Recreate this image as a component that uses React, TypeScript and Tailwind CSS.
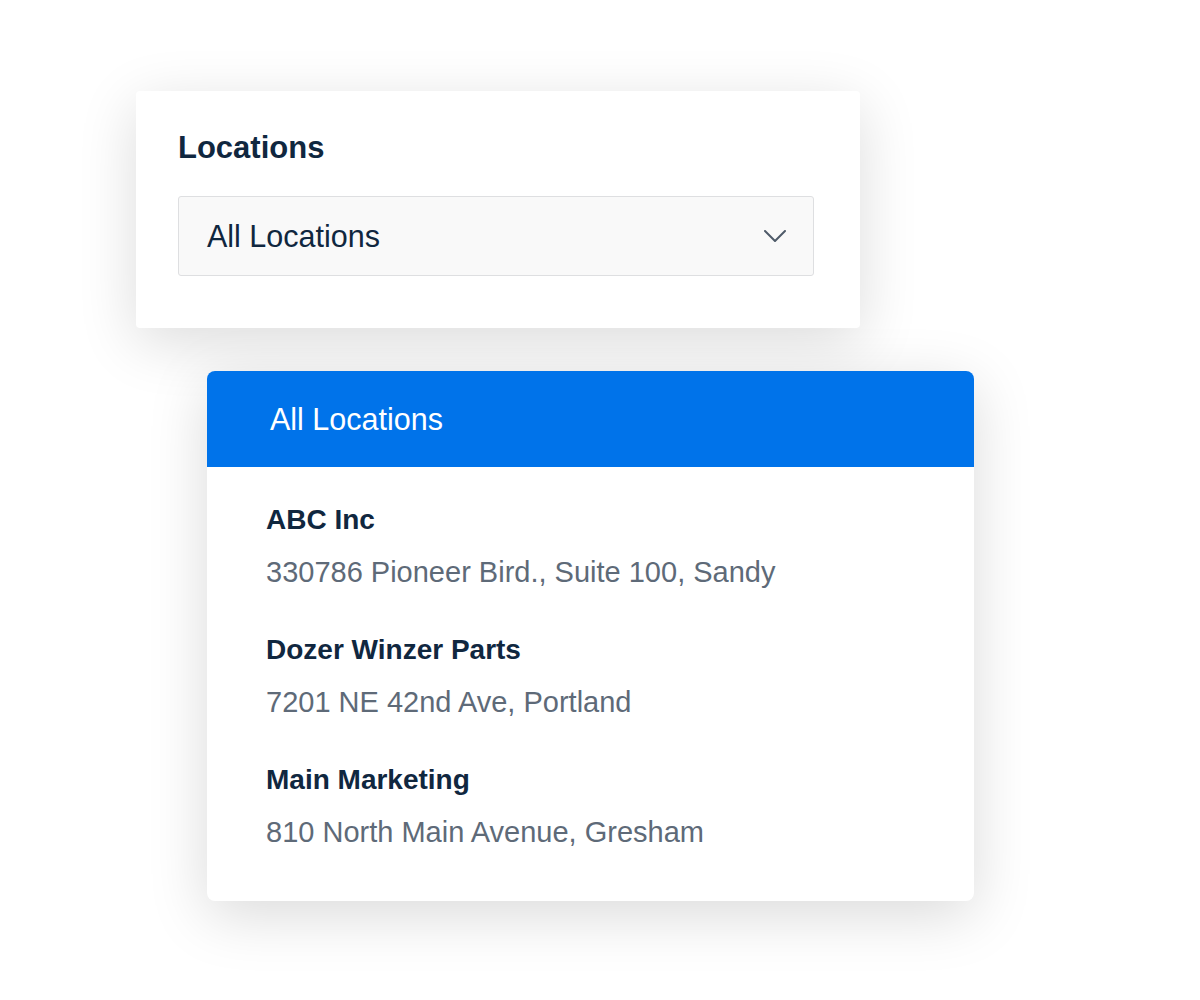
const locations = [
  { name: "ABC Inc", address: "330786 Pioneer Bird., Suite 100, Sandy" },
  { name: "Dozer Winzer Parts", address: "7201 NE 42nd Ave, Portland" },
  { name: "Main Marketing", address: "810 North Main Avenue, Gresham" },
];

export default function App() {
  return (
    <div className="min-h-[1000px] w-[1200px] bg-white pt-[91px] font-['Liberation_Sans',Arial,sans-serif]">
      {/* filter card */}
      <div className="ml-[136px] w-[724px] rounded-[4px] bg-white pl-[42px] pr-[46px] pt-[39px] pb-[52px] shadow-[0_14px_60px_rgba(0,0,0,0.14)]">
        <h2 className="text-[31px] font-bold leading-[36px] text-[#10273f]">Locations</h2>
        <div className="mt-[30px] flex h-[80px] items-center justify-between rounded-[3px] border border-[#dedfe1] bg-[#f9f9f9] pl-[28px] pr-[27px]">
          <span className="text-[30.5px] leading-none text-[#10273f]">All Locations</span>
          <svg width="22" height="12" viewBox="0 0 22 12" fill="none" className="text-[#4f5b69]">
            <path d="M1 1l10 10L21 1" stroke="currentColor" strokeWidth="2" strokeLinecap="round" strokeLinejoin="round" />
          </svg>
        </div>
      </div>

      {/* dropdown list */}
      <div className="ml-[207px] mt-[43px] w-[767px] overflow-hidden rounded-[8px] bg-white shadow-[0_14px_60px_rgba(0,0,0,0.15)]">
        <div className="flex h-[96px] items-center bg-[#0073ea] pl-[63px]">
          <span className="text-[30.5px] leading-none text-white">All Locations</span>
        </div>
        <div className="flex flex-col gap-[26px] pl-[59px] pt-[27px] pb-[43px]">
          {locations.map((loc) => (
            <div key={loc.name}>
              <div className="text-[28px] font-bold leading-[52px] text-[#10273f]">{loc.name}</div>
              <div className="text-[29px] leading-[52px] text-[#5e6a78]">{loc.address}</div>
            </div>
          ))}
        </div>
      </div>
    </div>
  );
}
